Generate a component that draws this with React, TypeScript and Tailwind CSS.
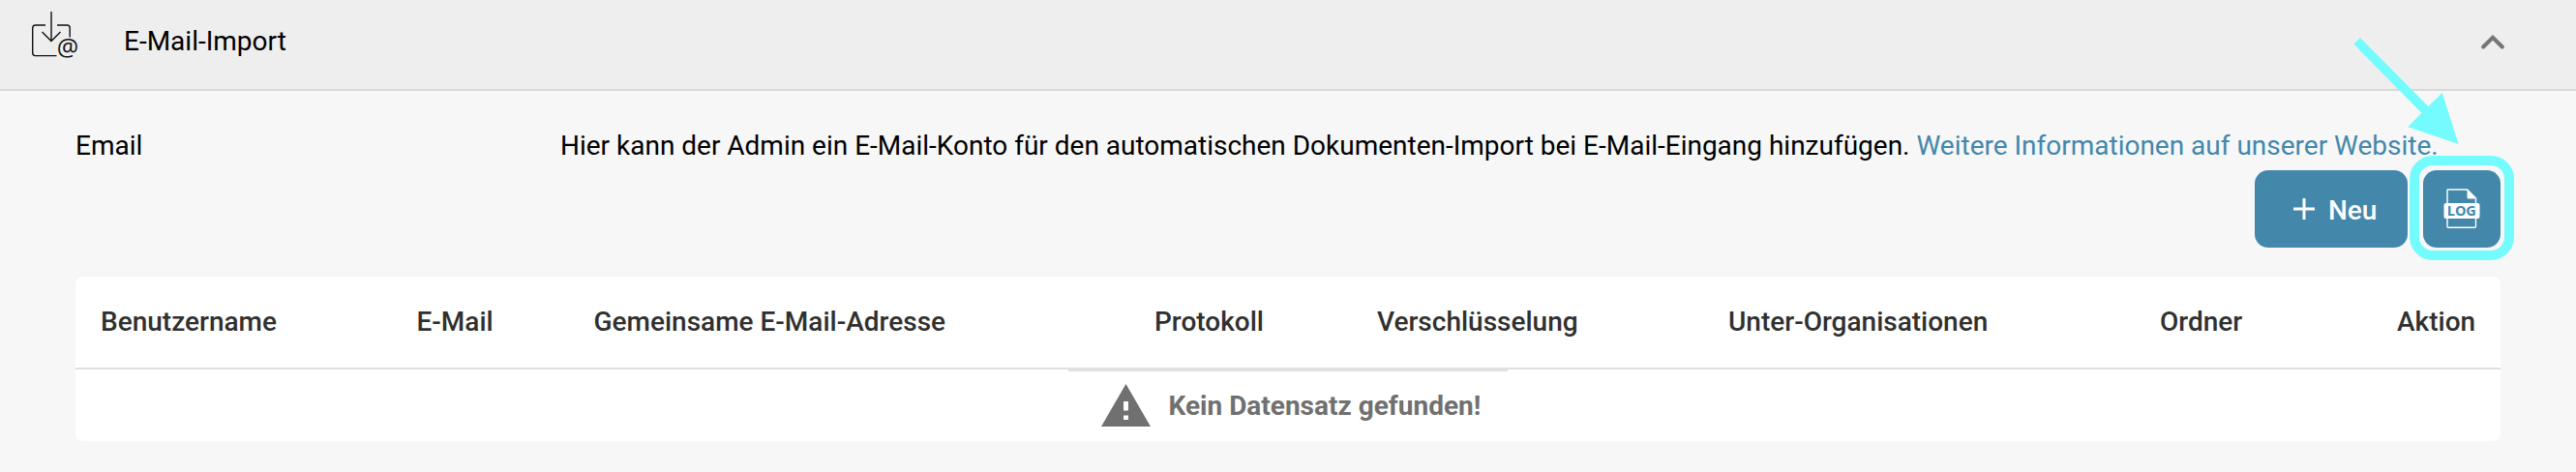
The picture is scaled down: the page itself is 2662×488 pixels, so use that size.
const columns = [
  'Benutzername',
  'E-Mail',
  'Gemeinsame E-Mail-Adresse',
  'Protokoll',
  'Verschlüsselung',
  'Unter-Organisationen',
  'Ordner',
  'Aktion',
];

function ImportIcon() {
  return (
    <svg className="h-[60px] w-[54px] shrink-0 overflow-visible" viewBox="0 0 54 60" fill="none" stroke="#111" strokeWidth="1.4">
      <path d="M15 16H4.500Q1.700 16 1.700 19V44.500Q1.700 47.600 4.500 47.600H26.500" />
      <path d="M27 16H37.500Q40.200 16 40.200 19V28.500" />
      <path d="M21 2V32.500M11.500 23L21 32.500L30.500 23" />
      <text x="38" y="47.800" textAnchor="middle" fontFamily="Open Sans" fontSize="25" fill="#111" stroke="none">@</text>
    </svg>
  );
}

function LogIcon() {
  return (
    <svg className="h-[42px] w-[38px]" viewBox="0 0 38 42" fill="none">
      <path d="M5 1H24.500L33.500 10V39Q33.500 40.300 32.300 40.300H5Q4 40.300 4 39.300V1.700Q4 1 5 1Z" stroke="#fff" strokeWidth="1.400" />
      <path d="M24.500 0.500L34.200 10.500H26Q24.500 10.500 24.500 9Z" fill="#fff" />
      <rect x="0.500" y="15" width="37" height="16" rx="2" fill="#fff" />
      <text x="18.800" y="28.200" textAnchor="middle" textLength="30" fontFamily="Open Sans" fontWeight="700" fontSize="14.500" fill="#4387ab">LOG</text>
    </svg>
  );
}

export default function App() {
  return (
    <div className="relative h-[488px] w-[2662px] overflow-hidden bg-[#f7f7f7] font-['Roboto',sans-serif] text-[28px] leading-10 text-black">
      <header className="flex h-[94px] items-start justify-between border-b-2 border-[#d9d9d9] bg-[#eeeeee] pl-8 pr-[74px]">
        <div className="flex">
          <div className="pt-[10px]"><ImportIcon /></div>
          <h1 className="pl-[42px] pt-[23px]">E-Mail-Import</h1>
        </div>
        <svg className="mt-[35px] h-4 w-6" viewBox="0 0 24 16" fill="none" stroke="#757575" strokeWidth="4" strokeLinecap="round">
          <path d="M2.200 13.500L12 3.800L21.800 13.500" />
        </svg>
      </header>

      <main className="px-[78px] pt-[37px]">
        <div className="flex">
          <div className="w-[501px]">Email</div>
          <p className="whitespace-nowrap tracking-[-0.007px]">
            Hier kann der Admin ein E-Mail-Konto für den automatischen Dokumenten-Import bei E-Mail-Eingang hinzufügen.{' '}
            <a className="text-[#4387ab]">Weitere Informationen auf unserer Website.</a>
          </p>
        </div>
        <div className="mt-[5px] flex justify-end gap-4">
          <button className="flex h-20 w-[158px] items-center rounded-[14px] bg-[#4387ab] pl-10 font-medium text-white">
            <svg className="h-[22px] w-[22px]" viewBox="0 0 22 22" stroke="#fff" strokeWidth="3">
              <path d="M11 0V22M0 11H22" />
            </svg>
            <span className="pl-3.5 pt-[3px]">Neu</span>
          </button>
          <button className="flex size-20 items-center justify-center rounded-[14px] bg-[#4387ab]">
            <LogIcon />
          </button>
        </div>

        <section className="mt-[30px] h-[170px] rounded-lg bg-white">
          <div className="grid h-24 grid-cols-[326.5px_183px_579.5px_230px_363px_446px_244px_1fr] border-b-2 border-[#e0e0e0] pl-[26px] pt-[27px] font-medium text-[#303030]">
            {columns.map((name) => (
              <div key={name} className="whitespace-nowrap last:pl-px">{name}</div>
            ))}
          </div>
          <div className="ml-[1026px] flex w-[454px] border-t-2 border-[#e0e0e0] pl-[34px] font-bold text-[#707070]">
            <svg className="mt-[13px] h-11 w-[51px]" viewBox="0 0 52 44" preserveAspectRatio="none">
              <path fillRule="evenodd" d="M26 0L52 44H0ZM23.500 18V27.500H28.500V18ZM23.500 32.500V37H28.500V32.500Z" fill="#707070" />
            </svg>
            <span className="whitespace-nowrap pl-[18.5px] pt-4">Kein Datensatz gefunden!</span>
          </div>
        </section>
      </main>

      <svg className="absolute left-[2430px] top-[37px] h-[114px] w-[114px]" viewBox="0 0 114 114" fill="#74fbfd">
        <path d="M9 2L79.300 73L93.700 59L110.700 112L58.300 94.300L72.300 79.700L2.300 8.500Z" />
      </svg>
      <div className="absolute left-[2490px] top-[161px] size-[108px] rounded-3xl border-[10px] border-[#74fbfd]" />
    </div>
  );
}
